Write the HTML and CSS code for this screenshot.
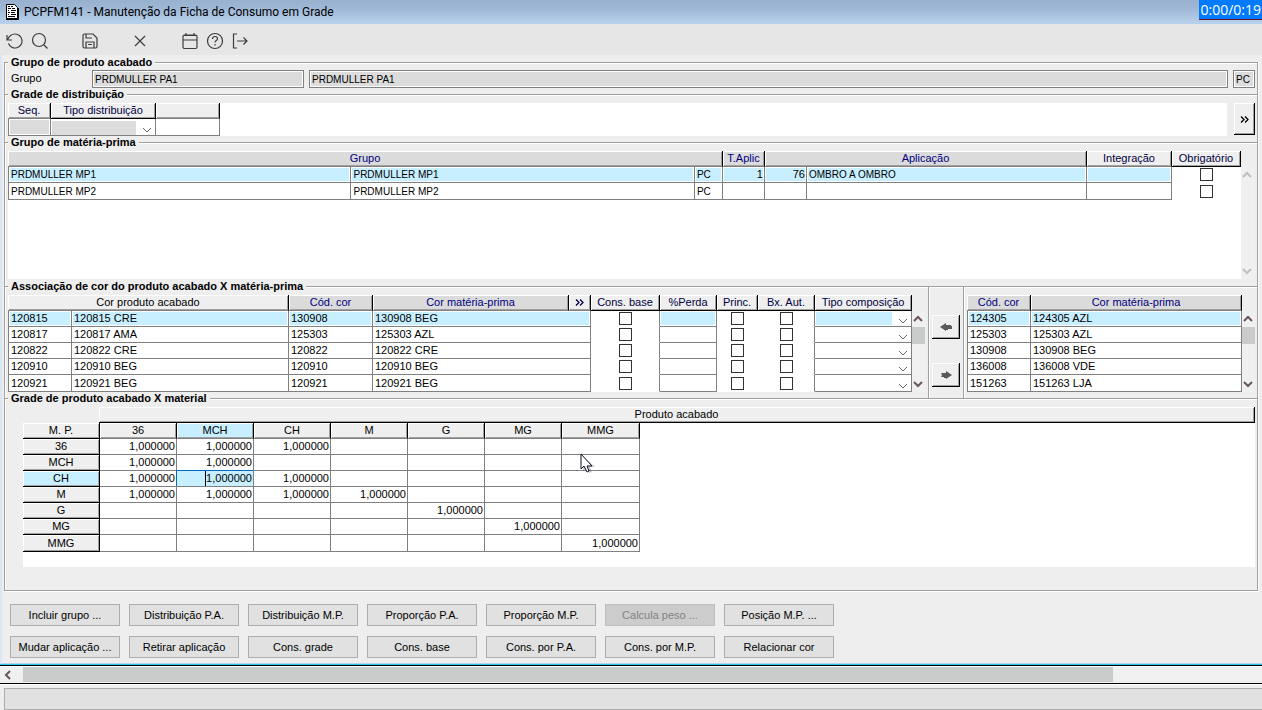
FILE: index.html
```html
<!DOCTYPE html>
<html lang="pt-BR">
<head>
    <meta charset="UTF-8">
    <meta name="viewport" content="width=device-width, initial-scale=1.0">
    <title>PCPFM141 - Manutenção da Ficha de Consumo em Grade</title>
    <link rel="stylesheet" href="styles.css">
</head>
<body>
    <!-- Ícones reutilizados -->
    <svg class="defs" width="0" height="0">
        <symbol id="down" viewBox="0 0 10 10"><path d="M1 3l4 4 4-4" fill="none" stroke="currentColor"/></symbol>
        <symbol id="sb-up" viewBox="0 0 10 10"><path d="M1 7l4-4 4 4" fill="none" stroke="currentColor" stroke-width="2"/></symbol>
        <symbol id="sb-down" viewBox="0 0 10 10"><path d="M1 3l4 4 4-4" fill="none" stroke="currentColor" stroke-width="2"/></symbol>
        <symbol id="more" viewBox="0 0 9 9"><path d="M1 1.500l3 3-3 3M5 1.500l3 3-3 3" fill="none" stroke="currentColor" stroke-width="1.300"/></symbol>
    </svg>

    <header class="titlebar">
        <svg width="13" height="16" viewBox="0 0 13 16">
            <path d="M.5.5h8l3 3v11H.5z" fill="#fff" stroke="#000"/>
            <path d="M0 15.500h12.500V4" fill="none" stroke="#000"/>
            <path d="M2 2.500h2M5 2.500h2M2 4.500h3M6 4.500h3M2 6.500h1M5 6.500h5M2 8.500h2M5 8.500h4M2 10.500h1M5 10.500h5M2 12.500h7" stroke="#000"/>
        </svg>
        <h1>PCPFM141 - Manutenção da Ficha de Consumo em Grade</h1>
        <span class="timer">0:00/0:19</span>
    </header>

    <nav class="toolbar">
        <button type="button" aria-label="Desfazer"><svg viewBox="0 0 18 18"><path d="M1 3v5h5M1.500 8C3 4 5.500 2 9 2a7 7 0 1 1-6.500 9.500"/></svg></button>
        <button type="button" aria-label="Pesquisar"><svg viewBox="0 0 18 18"><circle cx="8" cy="8" r="6.500"/><path d="M13 13l3.500 3.500"/></svg></button>
        <button type="button" class="gap" aria-label="Salvar"><svg viewBox="0 0 18 18"><path d="M2 3.500Q2 2 3.500 2H12l4 4v8.500q0 1.500-1.500 1.500h-11Q2 16 2 14.500zM5 2v4h6M5 16v-6h8v6M7 12.500h4"/></svg></button>
        <button type="button" class="gap" aria-label="Cancelar"><svg viewBox="0 0 18 18"><path d="M4 4l10 10M14 4L4 14"/></svg></button>
        <button type="button" class="gap" aria-label="Calendário"><svg viewBox="0 0 18 18"><rect x="2" y="3" width="14" height="13.500" rx="1.500"/><path d="M2 8h14M5 1v3M13 1v3M3 3.500h12"/></svg></button>
        <button type="button" aria-label="Ajuda"><svg viewBox="0 0 18 18"><circle cx="9" cy="9" r="7.500"/><path d="M6.500 7c0-3.300 5-3.300 5-.3 0 1.800-2.500 1.900-2.500 3.800M9 12v1.500"/></svg></button>
        <button type="button" aria-label="Sair"><svg viewBox="0 0 18 18"><path d="M6 2H2.500v14H6M6 9h10M12.500 5.500L16 9l-3.500 3.500"/></svg></button>
    </nav>

    <main>
        <fieldset class="produto">
            <legend>Grupo de produto acabado</legend>
            <div class="campos">
                <label for="grupo">Grupo</label>
                <input type="text" id="grupo" class="codigo" value="PRDMULLER PA1" readonly>
                <input type="text" class="descricao" aria-label="Descrição" value="PRDMULLER PA1" readonly>
                <input type="text" class="unidade" aria-label="Unidade" value="PC" readonly>
            </div>
        </fieldset>

        <fieldset class="distribuicao">
            <legend>Grade de distribuição</legend>
            <div class="linha">
                <div class="painel">
                    <table class="t-dist">
                        <colgroup><col class="w43"><col class="w105"><col class="w64"></colgroup>
                        <thead><tr><th>Seq.</th><th class="chk">Tipo distribuição</th><th></th></tr></thead>
                        <tbody>
                            <tr>
                                <td class="off"></td>
                                <td><span class="combo off"><select aria-label="Tipo distribuição"><option></option></select><svg><use href="#down"/></svg></span></td>
                                <td></td>
                            </tr>
                        </tbody>
                    </table>
                </div>
                <button type="button" class="alto" aria-label="Mais"><svg width="9" height="9"><use href="#more"/></svg></button>
            </div>
        </fieldset>

        <fieldset class="materia">
            <legend>Grupo de matéria-prima</legend>
            <div class="rolagem">
                <div class="painel">
                    <table>
                        <colgroup><col><col><col class="w28"><col class="w42"><col class="w42"><col class="w280"><col class="w85"><col class="w69"></colgroup>
                        <thead>
                            <tr>
                                <th colspan="3" class="key">Grupo</th>
                                <th class="key">T.Aplic</th>
                                <th colspan="2" class="key">Aplicação</th>
                                <th>Integração</th>
                                <th class="chk">Obrigatório</th>
                            </tr>
                        </thead>
                        <tbody>
                            <tr class="sel"><td class="nome">PRDMULLER MP1</td><td class="nome">PRDMULLER MP1</td><td class="nome">PC</td><td class="num">1</td><td class="num">76</td><td class="nome">OMBRO A OMBRO</td><td></td><td class="chk"><input type="checkbox" aria-label="Obrigatório"></td></tr>
                            <tr><td class="nome">PRDMULLER MP2</td><td class="nome">PRDMULLER MP2</td><td class="nome">PC</td><td></td><td></td><td></td><td></td><td class="chk"><input type="checkbox" aria-label="Obrigatório"></td></tr>
                        </tbody>
                    </table>
                </div>
                <div class="scroll inativo"><svg><use href="#sb-up"/></svg><svg><use href="#sb-down"/></svg></div>
            </div>
        </fieldset>

        <fieldset class="associacao">
            <legend>Associação de cor do produto acabado X matéria-prima</legend>
            <div class="colunas">
                <div class="rolagem esquerda">
                    <div class="painel">
                        <table>
                            <colgroup><col class="w64"><col><col class="w84"><col class="w196"><col class="w22"><col class="w69"><col class="w57"><col class="w41"><col class="w57"><col class="w97"></colgroup>
                            <thead>
                                <tr>
                                    <th colspan="2" class="preto">Cor produto acabado</th>
                                    <th class="key">Cód. cor</th>
                                    <th class="key">Cor matéria-prima</th>
                                    <th><button type="button" class="mais" aria-label="Mais"><svg width="9" height="9"><use href="#more"/></svg></button></th>
                                    <th class="chk">Cons. base</th>
                                    <th class="chk">%Perda</th>
                                    <th class="chk">Princ.</th>
                                    <th class="chk">Bx. Aut.</th>
                                    <th class="chk">Tipo composição</th>
                                </tr>
                            </thead>
                            <tbody>
                                <tr class="sel"><td>120815</td><td>120815 CRE</td><td>130908</td><td colspan="2">130908 BEG</td><td class="chk lado"><input type="checkbox" aria-label="Cons. base"></td><td></td><td class="chk"><input type="checkbox" aria-label="Princ."></td><td class="chk lado"><input type="checkbox" aria-label="Bx. Aut."></td><td><span class="combo"><select aria-label="Tipo composição"><option></option></select><svg><use href="#down"/></svg></span></td></tr>
                                <tr><td>120817</td><td>120817 AMA</td><td>125303</td><td colspan="2">125303 AZL</td><td class="chk lado"><input type="checkbox" aria-label="Cons. base"></td><td></td><td class="chk"><input type="checkbox" aria-label="Princ."></td><td class="chk lado"><input type="checkbox" aria-label="Bx. Aut."></td><td><span class="combo"><select aria-label="Tipo composição"><option></option></select><svg><use href="#down"/></svg></span></td></tr>
                                <tr><td>120822</td><td>120822 CRE</td><td>120822</td><td colspan="2">120822 CRE</td><td class="chk lado"><input type="checkbox" aria-label="Cons. base"></td><td></td><td class="chk"><input type="checkbox" aria-label="Princ."></td><td class="chk lado"><input type="checkbox" aria-label="Bx. Aut."></td><td><span class="combo"><select aria-label="Tipo composição"><option></option></select><svg><use href="#down"/></svg></span></td></tr>
                                <tr><td>120910</td><td>120910 BEG</td><td>120910</td><td colspan="2">120910 BEG</td><td class="chk lado"><input type="checkbox" aria-label="Cons. base"></td><td></td><td class="chk"><input type="checkbox" aria-label="Princ."></td><td class="chk lado"><input type="checkbox" aria-label="Bx. Aut."></td><td><span class="combo"><select aria-label="Tipo composição"><option></option></select><svg><use href="#down"/></svg></span></td></tr>
                                <tr><td>120921</td><td>120921 BEG</td><td>120921</td><td colspan="2">120921 BEG</td><td class="chk lado"><input type="checkbox" aria-label="Cons. base"></td><td></td><td class="chk"><input type="checkbox" aria-label="Princ."></td><td class="chk lado"><input type="checkbox" aria-label="Bx. Aut."></td><td><span class="combo"><select aria-label="Tipo composição"><option></option></select><svg><use href="#down"/></svg></span></td></tr>
                            </tbody>
                        </table>
                    </div>
                    <div class="scroll curto"><svg><use href="#sb-up"/></svg><i></i><svg><use href="#sb-down"/></svg></div>
                </div>

                <div class="mover">
                    <button type="button" aria-label="Associar"><svg width="13" height="10" viewBox="0 0 13 10"><path d="M0 5l6-4v2h5v1h1v3H8v1H6v1z" fill="#5a5a5a"/></svg></button>
                    <button type="button" aria-label="Desassociar"><svg width="13" height="10" viewBox="0 0 13 10"><path d="M12 5L6 1v2H1l1 2-1 2h3v1h2v1z" fill="#5a5a5a"/></svg></button>
                </div>

                <div class="rolagem direita">
                    <div class="painel">
                        <table>
                            <colgroup><col class="w64"><col></colgroup>
                            <thead><tr><th class="key">Cód. cor</th><th class="key">Cor matéria-prima</th></tr></thead>
                            <tbody>
                                <tr class="sel"><td>124305</td><td>124305 AZL</td></tr>
                                <tr><td>125303</td><td>125303 AZL</td></tr>
                                <tr><td>130908</td><td>130908 BEG</td></tr>
                                <tr><td>136008</td><td>136008 VDE</td></tr>
                                <tr><td>151263</td><td>151263 LJA</td></tr>
                            </tbody>
                        </table>
                    </div>
                    <div class="scroll curto"><svg><use href="#sb-up"/></svg><i></i><svg><use href="#sb-down"/></svg></div>
                </div>
            </div>
        </fieldset>

        <fieldset class="grade">
            <legend>Grade de produto acabado X material</legend>
            <div class="faixa">Produto acabado</div>
            <div class="painel">
                <table class="t-grade">
                    <thead>
                        <tr><th>M. P.</th><th>36</th><th class="ativo">MCH</th><th>CH</th><th>M</th><th>G</th><th>MG</th><th>MMG</th></tr>
                    </thead>
                    <tbody>
                        <tr><th>36</th><td>1,000000</td><td>1,000000</td><td>1,000000</td><td></td><td></td><td></td><td></td></tr>
                        <tr><th>MCH</th><td>1,000000</td><td>1,000000</td><td></td><td></td><td></td><td></td><td></td></tr>
                        <tr><th class="ativo">CH</th><td>1,000000</td><td class="foco"><input type="text" aria-label="CH x MCH" value="1,000000"></td><td>1,000000</td><td></td><td></td><td></td><td></td></tr>
                        <tr><th>M</th><td>1,000000</td><td>1,000000</td><td>1,000000</td><td>1,000000</td><td></td><td></td><td></td></tr>
                        <tr><th>G</th><td></td><td></td><td></td><td></td><td>1,000000</td><td></td><td></td></tr>
                        <tr><th>MG</th><td></td><td></td><td></td><td></td><td></td><td>1,000000</td><td></td></tr>
                        <tr><th>MMG</th><td></td><td></td><td></td><td></td><td></td><td></td><td>1,000000</td></tr>
                    </tbody>
                </table>
            </div>
        </fieldset>

        <div class="acoes">
            <button type="button">Incluir grupo ...</button>
            <button type="button">Distribuição P.A.</button>
            <button type="button">Distribuição M.P.</button>
            <button type="button">Proporção P.A.</button>
            <button type="button">Proporção M.P.</button>
            <button type="button" disabled>Calcula peso ...</button>
            <button type="button">Posição M.P. ...</button>
            <button type="button">Mudar aplicação ...</button>
            <button type="button">Retirar aplicação</button>
            <button type="button">Cons. grade</button>
            <button type="button">Cons. base</button>
            <button type="button">Cons. por P.A.</button>
            <button type="button">Cons. por M.P.</button>
            <button type="button">Relacionar cor</button>
        </div>
    </main>

    <div class="hscroll">
        <svg width="23" height="16" viewBox="0 0 23 16"><path d="M10 4L6 8l4 4" fill="none" stroke="#6b5560" stroke-width="2"/></svg>
        <div class="trilho"><i></i></div>
    </div>
    <footer class="status"><div></div></footer>

    <svg class="cursor" width="16" height="22" viewBox="0 0 16 22">
        <path d="M3 3v15l4-3 2 5 3-1-2-5h5z" fill="#000" opacity=".2"/>
        <path d="M1 1v15l3-3 3 6 2-1-2-5h5z" fill="#fff" stroke="#101028"/>
    </svg>
</body>
</html>
```

FILE: styles.css
```css
* {
    box-sizing: border-box;
}
body {
    margin: 0;
    font-family: "Liberation Sans", Arial, sans-serif;
    font-size: 11px;
    line-height: 15px;
    color: #000;
    background-color: #eee;
}
button, input, select {
    font: inherit;
    color: inherit;
    margin: 0;
    padding: 0;
    border-radius: 0;
}
.defs {
    position: absolute;
}

/* Barra de título */
.titlebar {
    display: flex;
    align-items: center;
    gap: 5px;
    height: 24px;
    padding-left: 6px;
    background: linear-gradient(#98b1cf 0, #9db6d4 7px, #b8d1ec 24px);
}
.titlebar h1 {
    flex: 1;
    margin: 0;
    font: 12px/24px Roboto, "Open Sans", sans-serif;
}
.timer {
    align-self: flex-start;
    padding: 0 1px;
    font: 14px/19px "Open Sans", "Noto Sans", sans-serif;
    color: #fff;
    background-color: #007aff;
    box-shadow: 0 1px #6b1020;
}

/* Barra de ferramentas */
.toolbar {
    display: flex;
    align-items: center;
    height: 31px;
    padding: 3px 0 0 2px;
    background-color: #e6e6e6;
}
.toolbar button {
    display: flex;
    align-items: center;
    justify-content: center;
    width: 25px;
    height: 25px;
    border: none;
    background: none;
}
.toolbar .gap {
    margin-left: 25px;
}
.toolbar svg {
    width: 18px;
    height: 18px;
    fill: none;
    stroke: #3c3c3c;
    stroke-width: 1.2;
}

/* Grupos */
main {
    padding: 1px 4px 0 2px;
    border-left: 2px solid #dbe7f3;
    border-bottom: 1px solid #b9d4ea;
}
main > fieldset {
    min-width: 0;
    margin: 0 0 -6px;
    padding: 2px 2px 6px 3px;
    border: 1px solid #a0a0a0;
    border-bottom: none;
    box-shadow: 1px 0 #fff, inset 1px 1px #fff;
}
legend {
    padding: 0 3px;
    font-weight: bold;
    line-height: 13px;
    background-color: #eee;
}
fieldset.produto {
    padding-top: 1px;
}
fieldset.materia {
    padding-bottom: 7px;
}
fieldset.grade {
    margin-bottom: 13px;
    padding-bottom: 23px;
    border-bottom: 1px solid #a0a0a0;
    box-shadow: 1px 1px #fff, inset 1px 1px #fff;
}
.campos {
    display: flex;
    gap: 5px;
}
.campos label {
    width: 79px;
    padding-left: 3px;
    line-height: 17px;
}
.campos input {
    min-width: 0;
    height: 18px;
    padding: 0 2px;
    font-size: 10px;
    border: 1px solid #808080;
    background-color: #dcdcdc;
    box-shadow: inset 0 0 0 1px #fff;
}
.campos .codigo {
    width: 212px;
}
.campos .descricao {
    flex: 1;
}
.campos .unidade {
    width: 22px;
}
.linha {
    display: flex;
    gap: 7px;
}
.painel {
    flex: 1;
    min-width: 0;
    background-color: #fff;
}
.distribuicao .painel {
    height: 33px;
}
.materia .painel {
    min-height: 128px;
}

/* Tabelas */
table {
    width: 100%;
    table-layout: fixed;
    border-collapse: separate;
    border-spacing: 0;
}
th, td {
    height: 16px;
    padding: 0;
    overflow: hidden;
    white-space: nowrap;
}
th {
    font-weight: normal;
    color: #000040;
    border-right: 1px solid #000;
    border-bottom: 1px solid #808080;
    background-color: #efefef;
    box-shadow: inset 1px 1px #fff, inset -1px -1px #a0a0a0;
}
th.key {
    color: #000080;
    background-color: #dbdbdb;
}
th.chk {
    border-bottom-color: #000;
}
th.preto, .t-grade th {
    color: #000;
}
td {
    padding: 0 2px;
    border-right: 1px solid #808080;
    border-bottom: 1px solid #808080;
}
td:first-child {
    border-left: 1px solid #808080;
}
tbody tr:last-child > * {
    height: 17px;
}
.nome {
    font-size: 10px;
}
.num {
    padding-right: 1px;
    text-align: right;
}
.sel td {
    background-color: #c8efff;
    box-shadow: inset 0 0 0 1px #fff;
}
td.off {
    background-color: #dcdcdc;
    box-shadow: inset 0 0 0 1px #fff;
}
td.chk {
    padding: 0;
    border-color: transparent;
    text-align: center;
    background: none;
    box-shadow: none;
}
td.lado {
    border-right-color: #808080;
}
td input[type="checkbox"] {
    appearance: none;
    display: block;
    width: 13px;
    height: 13px;
    margin: 0 auto;
    border: 1px solid #333;
    background-color: #fff;
}
.combo {
    display: grid;
    grid-template-columns: 1fr 16px;
    height: 15px;
    margin: 0 -2px;
    background-color: #fff;
}
.combo select {
    grid-area: 1 / 1 / 2 / 3;
    width: 100%;
    min-width: 0;
    appearance: none;
    border: none;
    background: none;
}
.combo svg {
    grid-area: 1 / 2;
    align-self: end;
    width: 10px;
    height: 10px;
    margin-left: 3px;
    color: #666;
    pointer-events: none;
}
.sel .combo select {
    background: linear-gradient(#c8efff, #c8efff) 1px 1px / calc(100% - 20px) 13px no-repeat;
}
.combo.off select {
    background: linear-gradient(#dcdcdc, #dcdcdc) 1px 1px / calc(100% - 20px) 14px no-repeat;
}
.t-dist {
    width: 212px;
}
.w22 { width: 22px; }
.w28 { width: 28px; }
.w41 { width: 41px; }
.w42 { width: 42px; }
.w43 { width: 43px; }
.w57 { width: 57px; }
.w64 { width: 64px; }
.w69 { width: 69px; }
.w84 { width: 84px; }
.w85 { width: 85px; }
.w97 { width: 97px; }
.w105 { width: 105px; }
.w196 { width: 196px; }
.w280 { width: 280px; }

/* Barras de rolagem */
.rolagem {
    display: flex;
}
.scroll {
    display: flex;
    flex-direction: column;
    width: 13px;
    margin-top: 16px;
    color: #6b5560;
    background-color: #f0f0f0;
}
.scroll svg {
    width: 10px;
    height: 16px;
    margin-left: 1px;
}
.scroll svg:last-child {
    margin-top: auto;
}
.scroll i {
    height: 17px;
    background-color: #cacccb;
}
.inativo {
    width: 14px;
    color: #bfbfbf;
}

/* Botões em relevo */
.alto, .mover button {
    display: flex;
    align-items: center;
    justify-content: center;
    border: none;
    background-color: #efefef;
    box-shadow: inset -1px -1px #000, inset 1px 1px #fff, inset -2px -2px #a0a0a0;
}
.alto {
    width: 21px;
    height: 32px;
}
.mais {
    display: block;
    height: 11px;
    margin: 0 auto;
    border: none;
    background: none;
}
.mais svg {
    display: block;
}
.colunas {
    display: flex;
}
.esquerda {
    flex: 1;
    min-width: 0;
    padding-right: 3px;
}
.mover {
    display: flex;
    flex-direction: column;
    gap: 24px;
    width: 36px;
    margin: -8px 0 -6px;
    padding: 28px 0 0 3px;
    border: solid #a0a0a0;
    border-width: 0 1px;
    box-shadow: 1px 0 #fff, inset 1px 0 #fff;
}
.mover button {
    width: 28px;
    height: 24px;
}
.direita {
    width: 291px;
    padding-left: 3px;
}

/* Grade de consumo */
.faixa {
    height: 16px;
    margin-left: 91px;
    text-align: center;
    border: solid #000;
    border-width: 0 1px 1px 0;
    background-color: #efefef;
    box-shadow: inset 1px 1px #fff, inset -1px -1px #a0a0a0;
}
.grade .painel {
    min-height: 144px;
    margin-left: 15px;
}
.t-grade {
    width: 617px;
}
.t-grade th:not(:last-child) {
    width: 77px;
}
.t-grade tbody th, .t-grade th:first-child {
    border-bottom-color: #000;
}
.t-grade td {
    padding: 0 1px;
    text-align: right;
}
.t-grade td:first-child {
    border-left: none;
}
.t-grade th.ativo {
    background-color: #c8efff;
}
.t-grade .foco {
    overflow: visible;
    background-color: #c8efff;
    box-shadow: -1px -1px #0067c8;
}
.foco input {
    display: block;
    width: 47px;
    height: 15px;
    margin-left: auto;
    border: none;
    border-left: 1px solid #000;
    text-align: right;
    background: none;
}

/* Botões de ação */
.acoes {
    display: grid;
    grid-template-columns: repeat(7, 110px);
    gap: 10px 9px;
    padding: 0 0 5px 6px;
}
.acoes button {
    height: 22px;
    border: 1px solid #adadad;
    background-color: #e1e1e1;
}
.acoes button:disabled {
    color: #838383;
    border-color: #bfbfbf;
    background-color: #ccc;
}

.hscroll {
    display: flex;
    height: 20px;
    padding-top: 1px;
    border-top: 1px solid #28c8e8;
    border-bottom: 1px solid #000;
    background-color: #f0f0f0;
    box-shadow: inset 0 1px #000, inset 0 2px #fff;
}
.hscroll svg {
    flex: none;
    margin-top: 1px;
}
.trilho {
    flex: 1;
}
.trilho i {
    display: block;
    width: 88%;
    height: 15px;
    margin-top: 1px;
    background-color: #cacccb;
}
.status {
    padding: 3px 0 1px 4px;
    border-top: 1px solid #fff;
}
.status div {
    height: 22px;
    border: 1px solid #adadad;
    border-right: none;
    background-color: #e1e1e1;
}
.cursor {
    position: absolute;
    left: 580px;
    top: 453px;
}
```
